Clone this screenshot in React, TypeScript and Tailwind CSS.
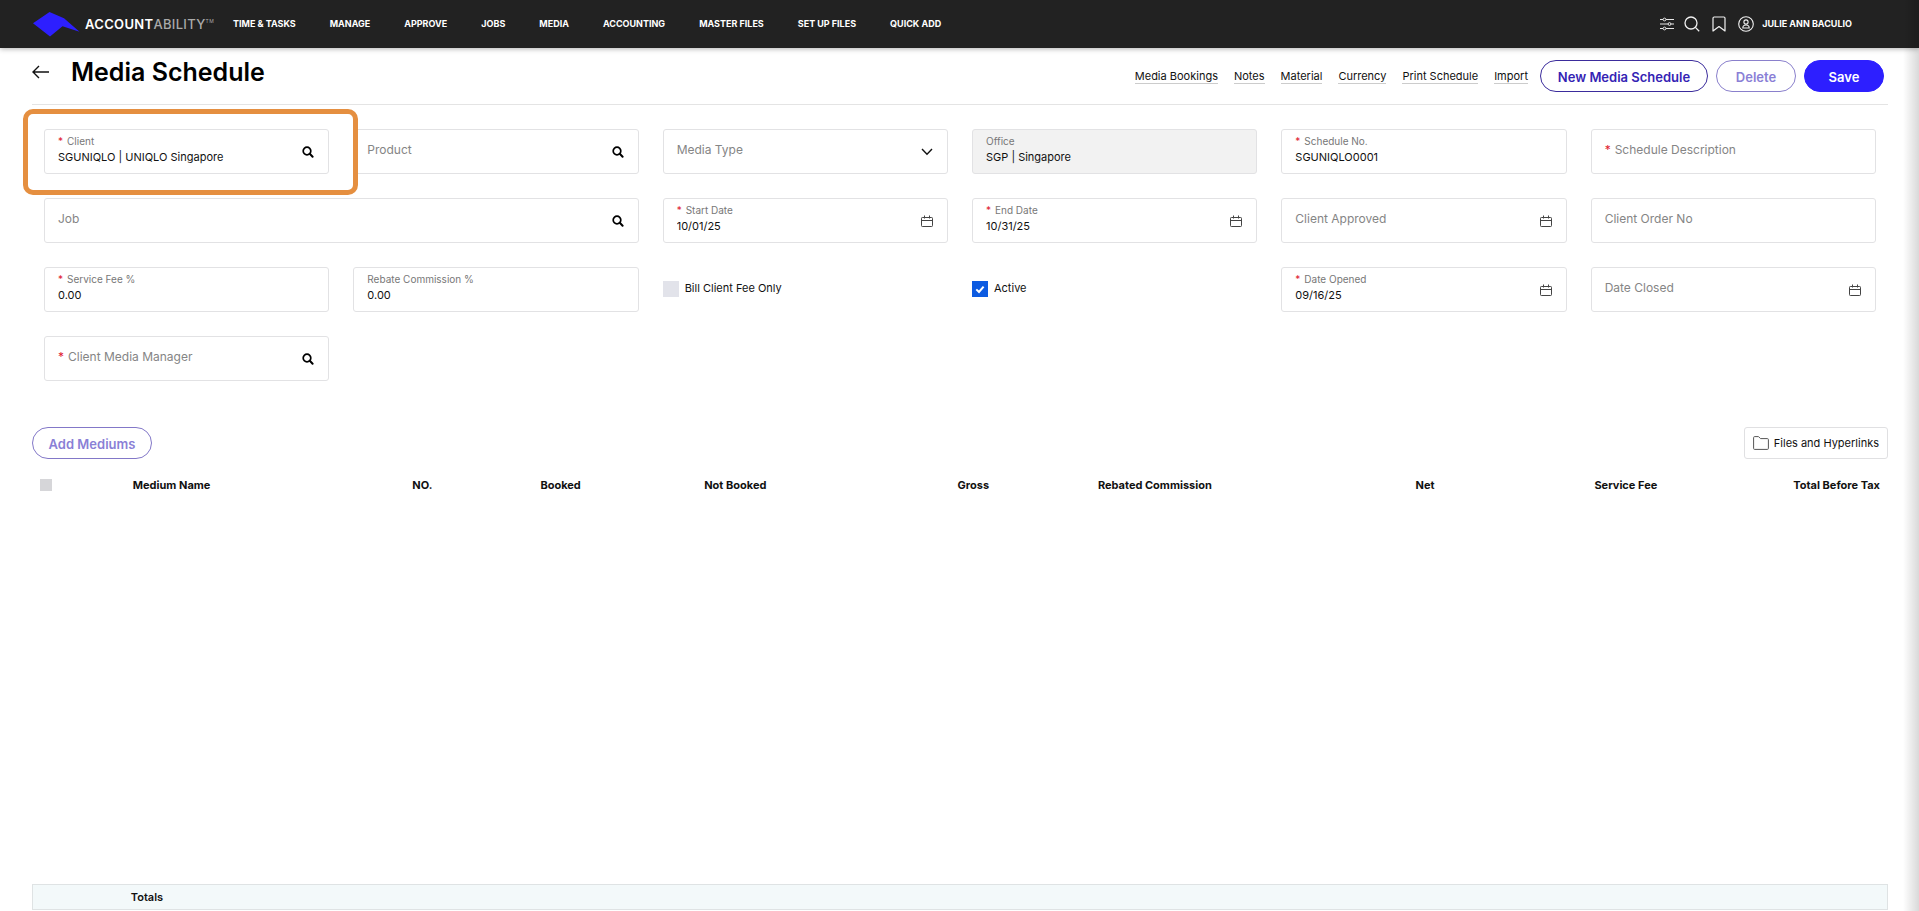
import { useId, type ReactNode } from "react";

const NAV = ["TIME & TASKS", "MANAGE", "APPROVE", "JOBS", "MEDIA", "ACCOUNTING", "MASTER FILES", "SET UP FILES", "QUICK ADD"];
const LINKS = ["Media Bookings", "Notes", "Material", "Currency", "Print Schedule", "Import"];
const AMOUNT_COLUMNS = ["Gross", "Rebated Commission", "Net", "Service Fee", "Total Before Tax"];

function LookupIcon() {
  return (
    <svg width="12" height="12" viewBox="0 0 12 12" fill="none" stroke="#000" aria-hidden="true">
      <circle cx="5" cy="5" r="3.8" strokeWidth="1.7" />
      <path d="M7.800 7.800 10.600 10.800" strokeWidth="2" strokeLinecap="round" />
    </svg>
  );
}

function CalendarIcon() {
  return (
    <svg width="12" height="13" viewBox="0 0 12 13" fill="none" stroke="#444" aria-hidden="true">
      <rect x="0.5" y="2.500" width="11" height="9" rx="0.8" />
      <path d="M0.500 5.500H11.500M3.500 0.500V3.500M8.500 0.500V3.500" />
    </svg>
  );
}

function ChevronIcon() {
  return (
    <svg width="12" height="8" viewBox="0 0 12 8" fill="none" stroke="#111" strokeWidth="1.4" aria-hidden="true">
      <path d="M1 1 6 6.200 11 1" />
    </svg>
  );
}

type FieldProps = {
  label: string;
  value?: string;
  required?: boolean;
  disabled?: boolean;
  icon?: "lookup" | "calendar" | "chevron";
  wide?: boolean;
  options?: boolean;
};

function Field({ label, value = "", required, disabled, icon, wide, options }: FieldProps) {
  const id = useId();
  const filled = value !== "";
  const star = required && <span className="mr-1 text-[#e0202f]">*</span>;
  const control = options ? (
    <select id={id} className="h-full w-full appearance-none bg-transparent outline-none" defaultValue="">
      <option value=""></option>
    </select>
  ) : (
    <input
      id={id}
      type="text"
      defaultValue={value}
      disabled={disabled}
      className={`w-full bg-transparent text-[11px] text-[#111] outline-none ${filled ? "h-4" : "h-full"}`}
    />
  );
  return (
    <div
      className={`relative flex h-[45px] rounded-[3px] border border-[#e2e2e4] pr-[14px] pl-[13px] ${wide ? "col-span-2" : ""} ${disabled ? "bg-[#f2f2f2]" : "bg-white"}`}
    >
      {filled ? (
        <div className="flex min-w-0 flex-1 flex-col gap-px pt-1">
          <label htmlFor={id} className="text-[10px] leading-[14px] text-[#777]">
            {star}
            {label}
          </label>
          {control}
        </div>
      ) : (
        <div className="grid min-w-0 flex-1">
          <label htmlFor={id} className="pointer-events-none col-start-1 row-start-1 pt-3 text-xs leading-4 text-[#858585]">
            {star}
            {label}
          </label>
          <div className="col-start-1 row-start-1">{control}</div>
        </div>
      )}
      {icon === "lookup" && (
        <button type="button" aria-label={`Look up ${label}`} className="mt-px self-center">
          <LookupIcon />
        </button>
      )}
      {icon === "calendar" && (
        <button type="button" aria-label={`Pick ${label}`} className="mt-px self-center">
          <CalendarIcon />
        </button>
      )}
      {icon === "chevron" && (
        <span className="pointer-events-none flex self-center">
          <ChevronIcon />
        </span>
      )}
    </div>
  );
}

function Check({ label, checked = false }: { label: string; checked?: boolean }) {
  return (
    <label className="flex items-center gap-[6px] self-center pb-0.5 text-[11px] text-[#111]">
      <span className="grid size-4">
        <input
          type="checkbox"
          defaultChecked={checked}
          className="peer col-start-1 row-start-1 size-4 appearance-none bg-[#e2e3ea] checked:bg-[#0d5be1]"
        />
        <svg
          viewBox="0 0 16 16"
          className="pointer-events-none invisible col-start-1 row-start-1 size-4 peer-checked:visible"
          fill="none"
          stroke="#fff"
          strokeWidth="2"
          aria-hidden="true"
        >
          <path d="M4.300 8.400 7 11 11.600 5.600" />
        </svg>
      </span>
      {label}
    </label>
  );
}

function PillButton({ className, children }: { className: string; children: ReactNode }) {
  return (
    <button type="button" className={`h-8 rounded-full border pt-0.5 text-[13px] leading-4 font-semibold ${className}`}>
      {children}
    </button>
  );
}

function Header() {
  return (
    <header className="flex h-12 items-center bg-[#222] pr-[67px] pl-[33px] text-white shadow-[0_1px_5px_rgba(0,0,0,0.3)]">
      <a href="#home" className="flex items-center gap-[5px]">
        <svg width="47" height="25" viewBox="0 0 47 25" aria-hidden="true">
          <path d="M0 11.200 16.500 0 31 6.300 46.500 19.800 29.500 14.200 17 24.500Z" fill="#2d1fff" />
        </svg>
        <span className="flex text-[13px] leading-4 tracking-wide">
          <span className="font-semibold">ACCOUNT</span>
          <span className="font-medium text-[#aaa]">ABILITY</span>
          <span className="text-[5px] leading-[10px] text-[#aaa]">TM</span>
        </span>
      </a>
      <nav className="ml-[19px] flex flex-1 gap-[34px] text-[9px] font-bold">
        {NAV.map((item) => (
          <a key={item} href="#nav" className="whitespace-nowrap">
            {item}
          </a>
        ))}
      </nav>
      <div className="flex items-center">
        <button type="button" aria-label="Filters" className="mr-[10px]">
          <svg width="14" height="14" viewBox="0 0 14 14" fill="none" stroke="#e8e8e8" aria-hidden="true">
            <path d="M0 2.500H3M6 2.500H14M0 7H8M11 7H14M0 11.500H3M6 11.500H14" />
            <circle cx="4.5" cy="2.5" r="1.4" />
            <circle cx="9.5" cy="7" r="1.4" />
            <circle cx="4.5" cy="11.5" r="1.4" />
          </svg>
        </button>
        <button type="button" aria-label="Search" className="mr-3">
          <svg width="16" height="16" viewBox="0 0 16 16" fill="none" stroke="#f0f0f0" strokeWidth="1.3" aria-hidden="true">
            <circle cx="7" cy="7" r="6" />
            <path d="M11.400 11.400 15.200 15.200" />
          </svg>
        </button>
        <button type="button" aria-label="Bookmarks" className="mr-3">
          <svg width="14" height="16" viewBox="0 0 14 16" fill="none" stroke="#f0f0f0" strokeWidth="1.2" aria-hidden="true">
            <path d="M1 15V2.200Q1 1 2.200 1H11.800Q13 1 13 2.200V15L7 10.500Z" strokeLinejoin="round" />
          </svg>
        </button>
        <button type="button" className="flex items-center gap-2 text-[9px] font-bold whitespace-nowrap">
          <svg width="16" height="16" viewBox="0 0 16 16" fill="none" stroke="#f0f0f0" strokeWidth="1.1" aria-hidden="true">
            <circle cx="8" cy="8" r="7.3" />
            <circle cx="8" cy="6" r="2.100" />
            <path d="M4.800 12Q4.800 9 8 9T11.200 12Z" />
          </svg>
          JULIE ANN BACULIO
        </button>
      </div>
    </header>
  );
}

export default function App() {
  return (
    <div className="relative flex min-h-screen flex-col bg-white font-[Inter,'Liberation_Sans',sans-serif] text-[#111]">
      <Header />
      <main className="flex flex-1 flex-col pr-[31px] pb-px pl-8">
        <div className="flex h-[57px] items-center border-b border-[#e4e4e4]">
          <div className="flex flex-1 items-center gap-[22px] pb-2">
            <button type="button" aria-label="Back">
              <svg width="17" height="14" viewBox="0 0 17 14" fill="none" stroke="#111" strokeWidth="1.4" aria-hidden="true">
                <path d="M17 7H1M7 1 1 7 7 13" />
              </svg>
            </button>
            <h1 className="text-[25px] leading-8 font-semibold text-black">Media Schedule</h1>
          </div>
          <nav className="mr-3 flex gap-4 text-[11px] leading-[14px]">
            {LINKS.map((item) => (
              <a key={item} href="#section" className="border-b border-[#ccc]">
                {item}
              </a>
            ))}
          </nav>
          <div className="mr-1 flex gap-2">
            <PillButton className="w-[168px] border-[#3b2c9c] text-[#3423b4]">New Media Schedule</PillButton>
            <PillButton className="w-20 border-[#8a80cc] text-[#8a7fd6]">Delete</PillButton>
            <PillButton className="w-20 border-[#2d1fff] bg-[#2d1fff] text-white">Save</PillButton>
          </div>
        </div>

        <form className="relative grid grid-cols-6 gap-6 px-3 pt-6">
          <Field label="Client" value="SGUNIQLO | UNIQLO Singapore" required icon="lookup" />
          <Field label="Product" icon="lookup" />
          <Field label="Media Type" icon="chevron" options />
          <Field label="Office" value="SGP | Singapore" disabled />
          <Field label="Schedule No." value="SGUNIQLO0001" required />
          <Field label="Schedule Description" required />
          <Field label="Job" icon="lookup" wide />
          <Field label="Start Date" value="10/01/25" required icon="calendar" />
          <Field label="End Date" value="10/31/25" required icon="calendar" />
          <Field label="Client Approved" icon="calendar" />
          <Field label="Client Order No" />
          <Field label="Service Fee %" value="0.00" required />
          <Field label="Rebate Commission %" value="0.00" />
          <Check label="Bill Client Fee Only" />
          <Check label="Active" checked />
          <Field label="Date Opened" value="09/16/25" required icon="calendar" />
          <Field label="Date Closed" icon="calendar" />
          <Field label="Client Media Manager" required icon="lookup" />
          <div className="pointer-events-none absolute top-1 -left-[9px] h-[86px] w-[335px] rounded-[10px] border-[5px] border-[#e58f40]" />
        </form>

        <div className="mt-[46px] flex justify-between">
          <PillButton className="w-[120px] border-[#8378c8] text-[#8a7fd6]">Add Mediums</PillButton>
          <button type="button" className="flex h-8 items-center gap-[5px] rounded-[3px] border border-[#e0e0e2] px-2 text-[11px]">
            <svg width="16" height="14" viewBox="0 0 16 14" fill="none" stroke="#555" aria-hidden="true">
              <path d="M0.600 12.400V1.600Q0.600 0.600 1.600 0.600H5.500L7.500 2.600H14.400Q15.400 2.600 15.400 3.600V12.400Q15.400 13.400 14.400 13.400H1.600Q0.600 13.400 0.600 12.400Z" />
            </svg>
            Files and Hyperlinks
          </button>
        </div>

        <div className="mt-[11px] grid flex-1">
          <table className="h-full w-full table-fixed border-separate border-spacing-0 text-[11px] font-semibold">
            <colgroup>
              <col className="w-[5%]" />
              <col className="w-[12%]" />
              <col className="w-[5%]" />
              <col className="w-[8%]" />
              <col className="w-[10%]" />
              {AMOUNT_COLUMNS.map((c) => (
                <col key={c} className="w-[12%]" />
              ))}
            </colgroup>
            <thead>
              <tr className="h-[30px]">
                <th className="px-2 text-left">
                  <input type="checkbox" aria-label="Select all" className="block size-3 appearance-none bg-[#d6d6d9]" />
                </th>
                <th className="px-2 text-left">Medium Name</th>
                <th className="px-2 text-right">NO.</th>
                <th className="px-2 text-right">Booked</th>
                <th className="px-2 text-right">Not Booked</th>
                {AMOUNT_COLUMNS.map((c) => (
                  <th key={c} className="px-2 text-right whitespace-nowrap">
                    {c}
                  </th>
                ))}
              </tr>
            </thead>
            <tbody>
              <tr>
                <td colSpan={10}></td>
              </tr>
            </tbody>
            <tfoot>
              <tr className="h-[26px] bg-[#f3f9fa]">
                <td className="border-y border-l border-[#dfe3e4]"></td>
                <td className="border-y border-[#dfe3e4] px-[6px]">Totals</td>
                <td colSpan={8} className="border-y border-r border-[#dfe3e4]"></td>
              </tr>
            </tfoot>
          </table>
        </div>
      </main>
      <div className="pointer-events-none absolute inset-y-0 right-0 w-4 bg-gradient-to-r from-transparent to-black/15" />
    </div>
  );
}
